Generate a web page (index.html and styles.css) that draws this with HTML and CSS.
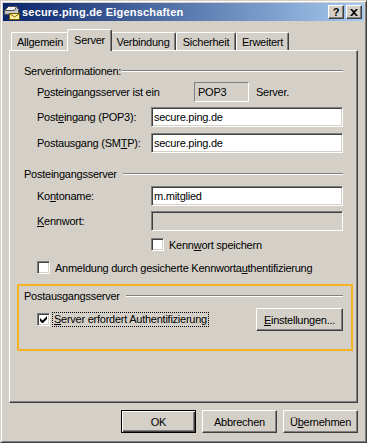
FILE: index.html
```html
<!DOCTYPE html>
<html lang="de">
<head>
    <meta charset="UTF-8">
    <meta name="viewport" content="width=device-width, initial-scale=1.0">
    <title>secure.ping.de Eigenschaften</title>
    <link rel="stylesheet" href="styles.css">
</head>
<body>
    <div class="window">
        <div class="titlebar">
            <svg class="app-icon" width="16" height="16" viewBox="0 0 16 16">
                <polygon points="0.5,6.5 4.5,2.5 12.5,2.5 14.5,5.5 14.5,9.5 0.5,10.5" fill="#c8c8c8" stroke="#505050"/>
                <polygon points="0.5,6.5 4.5,2.5 12.5,2.5 10.5,6.5" fill="#f0f0f0" stroke="#505050"/>
                <rect x="5.5" y="9.5" width="10" height="6" fill="#fff2a0" stroke="#7a5c00"/>
                <polyline points="5.5,9.5 10.5,13 15.5,9.5" fill="none" stroke="#7a5c00"/>
            </svg>
            <span class="title">secure.ping.de Eigenschaften</span>
            <div class="caption-buttons">
                <div class="cap-btn help">?</div>
                <div class="cap-btn">
                    <svg width="8" height="7" viewBox="0 0 8 7">
                        <path d="M0 0h2l2 2 2-2h2L5 3.5 8 7H6L4 5 2 7H0l3-3.5z" fill="#000"/>
                    </svg>
                </div>
            </div>
        </div>

        <div class="content">
            <div class="tabs">
                <div class="tab t-general">Allgemein</div>
                <div class="tab t-server active">Server</div>
                <div class="tab t-conn">Verbindung</div>
                <div class="tab t-sec">Sicherheit</div>
                <div class="tab t-adv">Erweitert</div>
            </div>

            <div class="panel">
                <div class="group-head tight">
                    <span>Serverinformationen:</span>
                    <div class="etch"></div>
                </div>
                <div class="row first">
                    <span class="label wide">P<u>o</u>steingangsserver ist ein</span>
                    <span class="static-box">POP3</span>
                    <span class="after">Server.</span>
                </div>
                <div class="row">
                    <span class="label">Post<u>e</u>ingang (POP3):</span>
                    <div class="field">secure.ping.de</div>
                </div>
                <div class="row gap6">
                    <span class="label">Postausgang (SM<u>T</u>P):</span>
                    <div class="field">secure.ping.de</div>
                </div>

                <div class="group-head second">
                    <span>Posteingangsserver</span>
                    <div class="etch"></div>
                </div>
                <div class="row gap6">
                    <span class="label">Ko<u>n</u>toname:</span>
                    <div class="field">m.mitglied</div>
                </div>
                <div class="row">
                    <span class="label"><u>K</u>ennwort:</span>
                    <div class="field disabled"></div>
                </div>
                <div class="check-row save-pw">
                    <span class="checkbox"></span>
                    <span>Kenn<u>w</u>ort speichern</span>
                </div>
                <div class="check-row spa">
                    <span class="checkbox"></span>
                    <span>Anmeldung durch gesicherte Kennworta<u>u</u>thentifizierung</span>
                </div>

                <div class="highlight">
                    <div class="group-head">
                        <span>Postausgangsserver</span>
                        <div class="etch"></div>
                    </div>
                    <div class="auth-row">
                        <span class="checkbox">
                            <svg width="7" height="7" viewBox="0 0 7 7">
                                <path d="M0 2v3l2 2h1l4-4V0L2.5 4.5z" fill="#000"/>
                            </svg>
                        </span>
                        <span class="focus-label"><u>S</u>erver erfordert Authentifizierung</span>
                        <button class="btn settings"><u>E</u>instellungen...</button>
                    </div>
                </div>
            </div>

            <div class="actions">
                <button class="btn default">OK</button>
                <button class="btn">Abbrechen</button>
                <button class="btn">Ü<u>b</u>ernehmen</button>
            </div>
        </div>
    </div>
</body>
</html>
```

FILE: styles.css
```css
body {
    margin: 0;
    font-family: "Liberation Sans", Arial, sans-serif;
    font-size: 11px;
    letter-spacing: -0.25px;
    color: #000;
    background: #d4d0c8;
}

.window {
    width: 367px;
    height: 443px;
    box-sizing: border-box;
    border: 1px solid;
    border-color: #d4d0c8 #404040 #404040 #d4d0c8;
    box-shadow: inset 1px 1px #fff, inset -1px -1px #808080;
    padding: 2px;
    display: flex;
    flex-direction: column;
    background: #d4d0c8;
}

/* title bar */
.titlebar {
    height: 18px;
    flex-shrink: 0;
    display: flex;
    align-items: center;
    padding: 0 2px 0 1px;
    background: linear-gradient(to right, #0a246a, #a6caf0);
}

.app-icon {
    display: block;
    margin-right: 2px;
}

.title {
    color: #fff;
    font-weight: bold;
    letter-spacing: 0.2px;
}

.caption-buttons {
    margin-left: auto;
    display: flex;
    gap: 2px;
}

.cap-btn {
    width: 16px;
    height: 14px;
    box-sizing: border-box;
    border: 1px solid;
    border-color: #fff #404040 #404040 #fff;
    box-shadow: inset -1px -1px #808080;
    background: #d4d0c8;
    display: flex;
    align-items: center;
    justify-content: center;
}

.cap-btn.help {
    font-weight: bold;
    font-size: 11px;
    line-height: 12px;
    letter-spacing: 0;
}

/* dialog content */
.content {
    flex: 1;
    display: flex;
    flex-direction: column;
    padding: 8px 6px 7px 6px;
}

.tabs {
    height: 21px;
    flex-shrink: 0;
    display: flex;
    align-items: flex-end;
    padding-left: 2px;
}

.tab {
    height: 18px;
    box-sizing: border-box;
    flex-shrink: 0;
    display: flex;
    align-items: center;
    justify-content: center;
    border-top: 1px solid #fff;
    border-left: 1px solid #fff;
    border-right: 1px solid #404040;
    box-shadow: inset -1px 0 #808080;
    border-radius: 2px 2px 0 0;
    background: #d4d0c8;
}

.t-general { width: 58px; }
.t-server { width: 41px; }
.t-conn { width: 66px; }
.t-sec { width: 60px; }
.t-adv { width: 53px; }

.tab.active {
    width: 45px;
    height: 22px;
    margin: 0 -2px -1px -2px;
    padding-bottom: 2px;
    position: relative;
    z-index: 1;
}

.panel {
    flex: 1;
    box-sizing: border-box;
    border: 1px solid;
    border-color: #fff #404040 #404040 #fff;
    box-shadow: inset -1px -1px #808080;
    padding: 13px 14px 0 14px;
    display: flex;
    flex-direction: column;
}

.group-head {
    height: 13px;
    display: flex;
    align-items: center;
}

.group-head.second {
    margin-top: 14px;
}

.etch {
    flex: 1;
    height: 0;
    border-top: 1px solid #808080;
    border-bottom: 1px solid #fff;
    margin-left: 6px;
}

.group-head.tight .etch {
    margin-left: 1px;
}

.row {
    display: flex;
    align-items: center;
    padding-left: 13px;
    margin-top: 5px;
}

.row.gap6 {
    margin-top: 6px;
}

.label {
    width: 114px;
    flex-shrink: 0;
}

.label.wide {
    width: 157px;
}

.field {
    flex: 1;
    height: 20px;
    box-sizing: border-box;
    border: 1px solid;
    border-color: #808080 #fff #fff #808080;
    box-shadow: inset 1px 1px #404040, inset -1px -1px #d4d0c8;
    background: #fff;
    padding: 0 2px;
    line-height: 18px;
}

.field.disabled {
    background: #d4d0c8;
}

.static-box {
    width: 55px;
    height: 20px;
    box-sizing: border-box;
    border: 1px solid;
    border-color: #808080 #fff #fff #808080;
    padding: 0 3px;
    line-height: 18px;
}

.after {
    margin-left: 7px;
}

.checkbox {
    width: 13px;
    height: 13px;
    flex-shrink: 0;
    box-sizing: border-box;
    border: 1px solid;
    border-color: #808080 #fff #fff #808080;
    box-shadow: inset 1px 1px #404040, inset -1px -1px #d4d0c8;
    background: #fff;
    display: flex;
    align-items: center;
    justify-content: center;
}

.check-row {
    display: flex;
    align-items: center;
    gap: 5px;
    height: 13px;
}

.check-row.save-pw {
    margin-top: 7px;
    padding-left: 127px;
}

.check-row.spa {
    margin-top: 10px;
    padding-left: 13px;
}

/* orange highlight around the outgoing server group */
.highlight {
    margin: 10px -10px 0 -7px;
    border: 2px solid #f5b324;
    padding: 3px 8px 18px 5px;
}

.auth-row {
    display: flex;
    align-items: center;
    margin-top: 6px;
    padding-left: 13px;
}

.focus-label {
    margin-left: 2px;
    border: 1px dotted #000;
    padding: 0 1px;
    line-height: 13px;
}

.btn {
    width: 75px;
    height: 23px;
    box-sizing: border-box;
    border: 1px solid;
    border-color: #fff #404040 #404040 #fff;
    box-shadow: inset -1px -1px #808080;
    background: #d4d0c8;
    font: inherit;
    letter-spacing: inherit;
    color: #000;
    padding: 0;
}

.btn.settings {
    width: 87px;
    margin-left: auto;
}

.btn.default {
    border-color: #000;
    box-shadow: inset 1px 1px #fff, inset -1px -1px #404040, inset -2px -2px #808080;
}

.actions {
    display: flex;
    justify-content: flex-end;
    gap: 6px;
    margin-top: 7px;
}
```
